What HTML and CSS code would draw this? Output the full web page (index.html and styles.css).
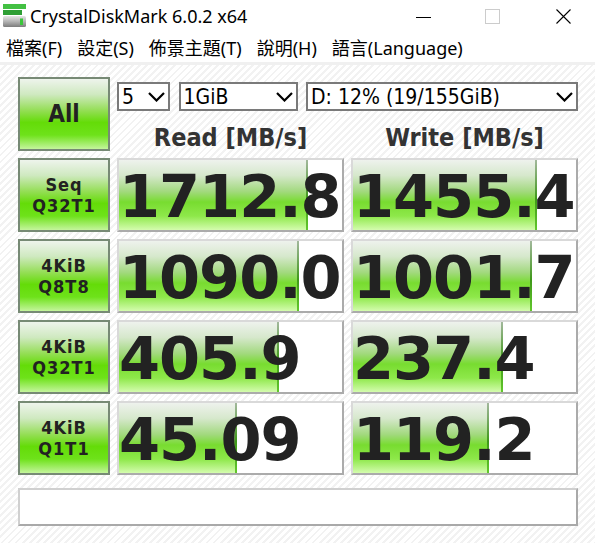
FILE: index.html
```html
<!DOCTYPE html>
<html lang="zh-Hant">
<head>
<meta charset="utf-8">
<title>CrystalDiskMark 6.0.2 x64</title>
<link rel="stylesheet" href="styles.css">
</head>
<body>
<div class="window">
  <header class="titlebar">
    <svg class="app-icon" viewBox="0 0 26 26" width="26" height="26">
      <defs>
        <linearGradient id="drive" x1="0" y1="0" x2="0" y2="1">
          <stop offset="0" stop-color="#e6e6e6"/>
          <stop offset="0.5" stop-color="#b4b4b4"/>
          <stop offset="1" stop-color="#7c7c7c"/>
        </linearGradient>
      </defs>
      <rect x="1" y="2" width="23" height="5" fill="#43c043"/>
      <rect x="1" y="8" width="19" height="5" fill="#2f9f35"/>
      <rect x="1" y="14" width="23" height="11" rx="1.5" fill="url(#drive)"/>
      <rect x="18" y="16.5" width="3" height="6.5" fill="#3bc63b"/>
    </svg>
    <span class="title">CrystalDiskMark 6.0.2 x64</span>
    <div class="caption">
      <svg class="cap-min" viewBox="0 0 15 15" width="15" height="15"><line x1="0" y1="7.5" x2="15" y2="7.5" stroke="#000" stroke-width="1"/></svg>
      <svg class="cap-max" viewBox="0 0 15 15" width="15" height="15"><rect x="0.5" y="0.5" width="14" height="14" fill="none" stroke="#cccccc" stroke-width="1"/></svg>
      <svg class="cap-close" viewBox="0 0 15 15" width="15" height="15"><path d="M0.5 0.5 L14.5 14.5 M14.5 0.5 L0.5 14.5" stroke="#000" stroke-width="1.1" fill="none"/></svg>
    </div>
  </header>
  <nav class="menubar">
    <span>檔案(F)</span>
    <span>設定(S)</span>
    <span>佈景主題(T)</span>
    <span>說明(H)</span>
    <span>語言(Language)</span>
  </nav>
  <main class="content">
    <div class="bench">
      <div class="btn btn-all">All</div>
      <div class="controls">
        <div class="selects">
          <div class="select s-count"><span>5</span><svg class="chev" viewBox="0 0 17 10" width="17" height="10"><polyline points="1,1 8.5,8.5 16,1" fill="none" stroke="#000" stroke-width="2.2"/></svg></div>
          <div class="select s-size"><span>1GiB</span><svg class="chev" viewBox="0 0 17 10" width="17" height="10"><polyline points="1,1 8.5,8.5 16,1" fill="none" stroke="#000" stroke-width="2.2"/></svg></div>
          <div class="select s-drive"><span>D: 12% (19/155GiB)</span><svg class="chev" viewBox="0 0 17 10" width="17" height="10"><polyline points="1,1 8.5,8.5 16,1" fill="none" stroke="#000" stroke-width="2.2"/></svg></div>
        </div>
        <div class="headers">
          <div>Read [MB/s]</div>
          <div>Write [MB/s]</div>
        </div>
      </div>

      <div class="btn">Seq<br>Q32T1</div>
      <div class="result" style="--fill:189px">1712.8</div>
      <div class="result" style="--fill:184px">1455.4</div>

      <div class="btn">4KiB<br>Q8T8</div>
      <div class="result" style="--fill:180px">1090.0</div>
      <div class="result" style="--fill:179px">1001.7</div>

      <div class="btn">4KiB<br>Q32T1</div>
      <div class="result" style="--fill:160px">405.9</div>
      <div class="result" style="--fill:150px">237.4</div>

      <div class="btn">4KiB<br>Q1T1</div>
      <div class="result" style="--fill:118px">45.09</div>
      <div class="result" style="--fill:136px">119.2</div>

      <div class="comment"></div>
    </div>
  </main>
</div>
</body>
</html>
```

FILE: styles.css
```css
* { box-sizing: border-box; }

html, body {
  margin: 0;
  padding: 0;
  background: #ffffff;
}

.window {
  width: 595px;
  height: 543px;
  overflow: hidden;
  display: flex;
  flex-direction: column;
  background: #ffffff;
}

/* Title bar */
.titlebar {
  display: flex;
  align-items: flex-start;
  height: 32px;
  flex: none;
}

.app-icon {
  margin: 2px 0 0 2px;
  flex: none;
}

.title {
  margin-left: 2px;
  font-family: "Noto Sans", sans-serif;
  font-size: 18px;
  line-height: 32px;
  color: #000;
}

.caption {
  margin-left: auto;
  display: flex;
  padding: 9px 24px 0 0;
}

.cap-min { margin-top: 1px; }
.cap-max { margin-left: 54px; }
.cap-close { margin-left: 56px; }

/* Menu bar */
.menubar {
  flex: none;
  display: flex;
  gap: 15px;
  height: 33px;
  padding: 2px 0 0 6px;
  border-bottom: 3px solid #f0f0f0;
  font-family: "Noto Sans", "Noto Sans CJK TC", sans-serif;
  font-size: 18px;
  line-height: 28px;
  color: #000;
}

/* Content area */
.content {
  flex: 1;
  padding: 12px 0 0 18px;
  background: repeating-linear-gradient(135deg, #ffffff 0 3px, #f2f2f2 3px 5px);
}

.bench {
  display: grid;
  grid-template-columns: 92px 227px 227px;
  grid-template-rows: repeat(5, 74px) 44px;
  column-gap: 7px;
  row-gap: 7px;
}

.btn {
  display: flex;
  align-items: center;
  justify-content: center;
  text-align: center;
  border: 2px solid #778a75;
  background: linear-gradient(to bottom,
    #eef4ec 0%,
    #cfe9c0 22%,
    #94de55 45%,
    #64dc08 62%,
    #6ee21a 80%,
    #c4f59c 100%);
  font-family: "DejaVu Sans Condensed", "DejaVu Sans", sans-serif;
  font-weight: bold;
  font-size: 18px;
  line-height: 21px;
  letter-spacing: 1px;
  color: #222;
}

.btn-all {
  font-size: 24px;
  line-height: 28px;
  letter-spacing: 0;
}

.controls {
  grid-column: 2 / 4;
  display: flex;
  flex-direction: column;
}

.selects {
  margin-top: 5px;
  display: flex;
  justify-content: space-between;
}

.select {
  height: 29px;
  border: 2px solid #7a7a7a;
  background: #fff;
  display: flex;
  align-items: center;
  justify-content: space-between;
  padding: 1px 3px 0 3px;
  font-family: "DejaVu Sans Condensed", "DejaVu Sans", sans-serif;
  font-size: 21px;
  line-height: 25px;
  color: #000;
  white-space: nowrap;
}

.chev { flex: none; margin-top: -1px; }

.s-count { width: 53px; }
.s-size { width: 119px; }
.s-drive { width: 272px; }

.headers {
  display: grid;
  grid-template-columns: 227px 227px;
  column-gap: 7px;
  padding-top: 13px;
  font-family: "DejaVu Sans Condensed", "DejaVu Sans", sans-serif;
  font-weight: bold;
  font-size: 25px;
  line-height: 27px;
  color: #333;
  text-align: center;
  white-space: nowrap;
}

.result {
  --fill: 0px;
  border: 2px solid;
  border-color: #d9d9d9 #ababab #ababab #d9d9d9;
  background:
    linear-gradient(to bottom, #a2b89c 0%, #3f981a 55%, #62c82c 100%) calc(var(--fill) - 2px) 0 / 2px 100% no-repeat,
    linear-gradient(to bottom,
      #eef2ed 0%,
      #d6e8cc 22%,
      #a2d97e 45%,
      #78dc30 60%,
      #8ee84a 80%,
      #d4fcae 100%) 0 0 / var(--fill) 100% no-repeat,
    #ffffff;
  padding: 3px 0 0 0;
  overflow: hidden;
  white-space: nowrap;
  font-family: "DejaVu Sans", sans-serif;
  font-weight: bold;
  font-size: 59px;
  line-height: 68px;
  letter-spacing: -1px;
  color: #222;
}

.comment {
  grid-column: 1 / 4;
  margin-top: 6px;
  border: 2px solid;
  border-color: #d0d0d0 #a9a9a9 #a9a9a9 #d0d0d0;
  background: #ffffff;
}
```
